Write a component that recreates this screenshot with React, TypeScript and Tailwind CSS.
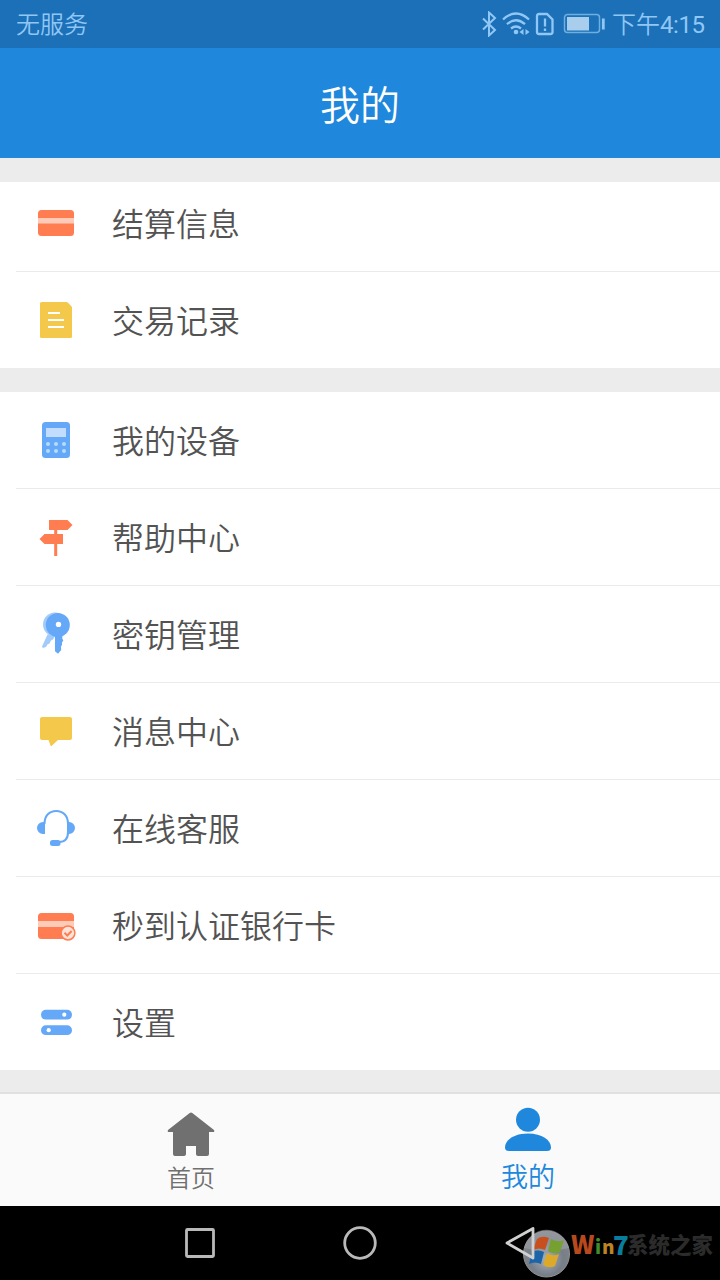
import React from 'react';

interface MenuItem {
  label: string;
  icon: React.ReactNode;
}

const ORANGE = '#ff7d51';
const YELLOW = '#f3c84b';
const BLUE = '#64a8f7';

const accountItems: MenuItem[] = [
  {
    label: '结算信息',
    icon: (
      <>
        <rect x="6" y="11" width="36" height="26" rx="3.5" fill={ORANGE} />
        <rect x="6" y="19" width="36" height="5.5" fill="#ffcbb9" />
      </>
    ),
  },
  {
    label: '交易记录',
    icon: (
      <>
        <path d="M9.500 6H35q2.500 2 5 5v29.500q0 1.500-1.500 1.500h-29Q8 42 8 40.500v-33Q8 6 9.500 6z" fill={YELLOW} />
        <path d="M16 17h12M16 24h16M16 31h16" stroke="#fff" strokeWidth="2" />
      </>
    ),
  },
];

const serviceItems: MenuItem[] = [
  {
    label: '我的设备',
    icon: (
      <>
        <rect x="10" y="6" width="28" height="36" rx="3.5" fill={BLUE} />
        <rect x="14" y="12" width="20" height="9" fill="#c1dcfc" />
        <g fill="#b4dcfc">
          <circle cx="16" cy="28" r="2" />
          <circle cx="24" cy="28" r="2" />
          <circle cx="32" cy="28" r="2" />
          <circle cx="16" cy="35" r="2" />
          <circle cx="24" cy="35" r="2" />
          <circle cx="32" cy="35" r="2" />
        </g>
      </>
    ),
  },
  {
    label: '帮助中心',
    icon: (
      <path
        d="M17 7h18.500l5 5-5 5H25.200v4H31v10h-5.800v12h-3V31H12.500l-5-5 5-5h9.700v-4H17z"
        fill={ORANGE}
      />
    ),
  },
  {
    label: '密钥管理',
    icon: (
      <>
        <g fill="#a2cbfb">
          <circle cx="23" cy="14.500" r="12" />
          <path d="M15.500 24.500L10 36.500l.8 1.500 3.200-1 1.500-2.500 2-1 1.500-3 2-1 3-5z" />
        </g>
        <path d="M23 25h7.300v3.500l1 2-1.300 2v2.500l-1 1.500.2 3.500-3.200 3.800-3-2.500z" fill={BLUE} />
        <circle cx="25.800" cy="15" r="12" fill={BLUE} />
        <circle cx="26.500" cy="14.400" r="2.700" fill="#fff" />
      </>
    ),
  },
  {
    label: '消息中心',
    icon: (
      <path
        d="M10 10h28q2 0 2 2v19q0 2-2 2H26l-6 5.500q-1 1-1.500 0L16.500 33H10q-2 0-2-2V12q0-2 2-2z"
        fill={YELLOW}
      />
    ),
  },
  {
    label: '在线客服',
    icon: (
      <>
        <path
          d="M12.500 20C12.500 11.500 17.500 7 24.200 7S36 11.500 36 20v8c0 6-3 10-9 10"
          fill="none"
          stroke={BLUE}
          strokeWidth="2"
        />
        <path d="M13 18v12h-2a6 6 0 0 1 0-12zM35 18h2a6 6 0 0 1 0 12h-2z" fill={BLUE} />
        <rect x="18" y="36" width="10.500" height="6" rx="2.500" fill={BLUE} />
      </>
    ),
  },
  {
    label: '秒到认证银行卡',
    icon: (
      <>
        <rect x="6" y="12" width="36" height="26" rx="3.5" fill={ORANGE} />
        <rect x="6" y="20" width="36" height="6" fill="#ffcbb9" />
        <circle cx="36" cy="32" r="6.900" fill="#ffe3d9" stroke={ORANGE} strokeWidth="1.500" />
        <path d="M32.500 31.800l2.800 2.700 4.300-4.500" fill="none" stroke={ORANGE} strokeWidth="2" />
      </>
    ),
  },
  {
    label: '设置',
    icon: (
      <>
        <rect x="9" y="11.800" width="31" height="9.800" rx="4.900" fill={BLUE} />
        <rect x="9" y="27.300" width="31" height="9.800" rx="4.900" fill={BLUE} />
        <circle cx="32.300" cy="16.700" r="2.100" fill="#fff" />
        <circle cx="16.700" cy="32.200" r="2.100" fill="#fff" />
      </>
    ),
  },
];

function MenuRow({ item }: { item: MenuItem }) {
  return (
    <li className="flex h-[97px] items-center border-b border-[#ebebeb] pl-4 last:h-24 last:border-b-0">
      <svg viewBox="0 0 48 48" className="h-12 w-12 shrink-0">
        {item.icon}
      </svg>
      <span className="ml-8 pt-1 text-[32px] leading-none text-[#535353]">{item.label}</span>
    </li>
  );
}

function MenuList({ items, className = '' }: { items: MenuItem[]; className?: string }) {
  return (
    <div className={`overflow-hidden bg-white pl-4 ${className}`}>
      <ul>
        {items.map((item) => (
          <MenuRow key={item.label} item={item} />
        ))}
      </ul>
    </div>
  );
}

function StatusBar() {
  return (
    <div className="flex h-12 items-center justify-between bg-[#1b70b7] pr-4 pl-4 text-2xl font-[350] text-[#91c7f5]">
      <span className="pt-[2px]">无服务</span>
      <div className="flex items-center">
        <svg viewBox="0 0 124 26" className="h-[26px] w-[124px]" fill="none" stroke="currentColor" strokeWidth="2">
          {/* bluetooth */}
          <path d="M2 7.500l12 11.500-6 5.500V1.500l6 5.500L2 18.500" />
          {/* wifi */}
          <g strokeWidth="2.300">
            <path d="M22 8.500q13-12 26 0" />
            <path d="M26 13.200q9-8 18 0" />
            <path d="M30 17.500q5-4 10 0" />
          </g>
          <circle cx="35" cy="21" r="2.300" fill="currentColor" stroke="none" />
          <path d="M42.500 18v6l-4-3zM44.500 18v6l4-3z" fill="currentColor" stroke="none" />
          {/* sim warning */}
          <path d="M58 3h8l5.500 5.500V21q0 2-2 2H58q-2 0-2-2V5q0-2 2-2z" strokeWidth="2.300" />
          <path d="M64 7.500v8M64 17.500v2.500" strokeWidth="2.300" />
          {/* battery */}
          <rect x="83.500" y="3.500" width="35" height="18" rx="3" stroke="#6eaee0" strokeWidth="1.500" />
          <rect x="86" y="6" width="22" height="13.500" fill="#a9cdec" stroke="none" />
          <path d="M122.300 7.500v11" strokeWidth="2.800" />
        </svg>
        <span className="ml-[7px] pt-[2px]">
          下午<span className="inline-block w-11 font-normal tracking-[-0.4px]">4:15</span>
        </span>
      </div>
    </div>
  );
}

function TabBar() {
  return (
    <nav className="grid h-[114px] grid-cols-[382px_1fr] border-t-2 border-[#e0e0e0] bg-[#fafafa]">
      <div className="flex flex-col items-center pt-[17px] text-[#707070]">
        <svg viewBox="0 0 48 46" className="h-[46px] w-12" fill="currentColor">
          <path d="M24 1.500q.700 0 1.300.600L47 19q1 2-1 2h-4v22q0 2-2 2h-9q-2 0-2-2v-8H19v8q0 2-2 2H8q-2 0-2-2V21H2q-2 0-1-2L22.700 2.100q.600-.600 1.300-.600z" />
        </svg>
        <span className="mt-[10px] text-2xl leading-none font-[350]">首页</span>
      </div>
      <div className="flex flex-col items-center pt-[13px] pr-[46px] text-[#2088dc]">
        <svg viewBox="0 0 48 46" className="h-[46px] w-12" fill="currentColor">
          <circle cx="24" cy="12.800" r="12" />
          <path d="M1 40.500C1 33 10 26.500 24 26.500S47 33 47 40.500q0 3.500-4 3.500H5q-4 0-4-3.500z" />
        </svg>
        <span className="mt-[12px] text-[27px] leading-none font-[350]">我的</span>
      </div>
    </nav>
  );
}

function SystemNav() {
  return (
    <div className="relative h-[74px] bg-black">
      <svg viewBox="0 0 720 74" className="h-full w-full" fill="none" stroke="#b9b9b9" strokeWidth="2.800">
        <rect x="186.500" y="23.500" width="27" height="27" rx="1" />
        <circle cx="360" cy="37" r="15.300" />
      </svg>
      {/* site badge */}
      <div className="absolute top-[15px] left-[500px] flex">
        <svg viewBox="0 0 72 59" className="h-[59px] w-[72px]">
          <defs>
            <radialGradient id="orb" cx="50%" cy="60%" r="60%">
              <stop offset="0" stopColor="#a6b2c0" />
              <stop offset="0.600" stopColor="#777e88" />
              <stop offset="1" stopColor="#84868a" />
            </radialGradient>
          </defs>
          <circle cx="46.500" cy="33" r="23" fill="url(#orb)" stroke="#929292" />
          <path d="M24 27Q46 33 69 27A23 23 0 0 0 24 27z" fill="#a1a4a9" opacity=".55" />
          <path d="M37 18q5-4 12-1l-4 12q-6-3-12 0z" fill="#c8501e" />
          <path d="M51 18q7 4 13 1l-4 12q-6 3-12-1z" fill="#76a02f" />
          <path d="M32 31q6-3 12 0l-3 12q-6-3-12 0z" fill="#1b64a7" />
          <path d="M47 32q6 4 12 1l-4 12q-6 3-12-1z" fill="#dcaa28" />
          <path d="M33 7.500L7 22l26 15z" fill="none" stroke="#d0d0d0" strokeWidth="2.800" strokeLinejoin="round" />
        </svg>
        <div className="-ml-[1px] flex h-[45px] items-center font-['Noto_Sans_CJK_SC',sans-serif] leading-none font-black whitespace-nowrap">
          <span className="w-[24px] text-[25px] text-[#b8491d]">W</span>
          <span className="w-[7px] pt-[3px] text-[19px] text-[#438b2b]">i</span>
          <span className="w-[11px] pt-[3px] text-[19px] text-[#bd8422]">n</span>
          <span className="w-[14px] text-[26px] text-[#087e9f]">7</span>
          <span className="text-[21.500px] text-[#2b2b2b]">系统之家</span>
        </div>
      </div>
    </div>
  );
}

export default function App() {
  return (
    <div className="flex h-[1280px] w-[720px] flex-col overflow-hidden bg-[#ececec] font-[Roboto,'Noto_Sans_CJK_SC',sans-serif]">
      <StatusBar />
      <header className="flex h-[110px] items-center justify-center bg-[#2088dc] pt-[7px]">
        <h1 className="text-[40px] leading-none font-[350] text-white">我的</h1>
      </header>

      <main className="flex flex-1 flex-col gap-6 pt-6 font-[350]">
        {/* first list is scrolled slightly under the header */}
        <MenuList items={accountItems} className="flex h-[186px] flex-col justify-end *:w-full" />
        <MenuList items={serviceItems} />
      </main>

      <TabBar />
      <SystemNav />
    </div>
  );
}
